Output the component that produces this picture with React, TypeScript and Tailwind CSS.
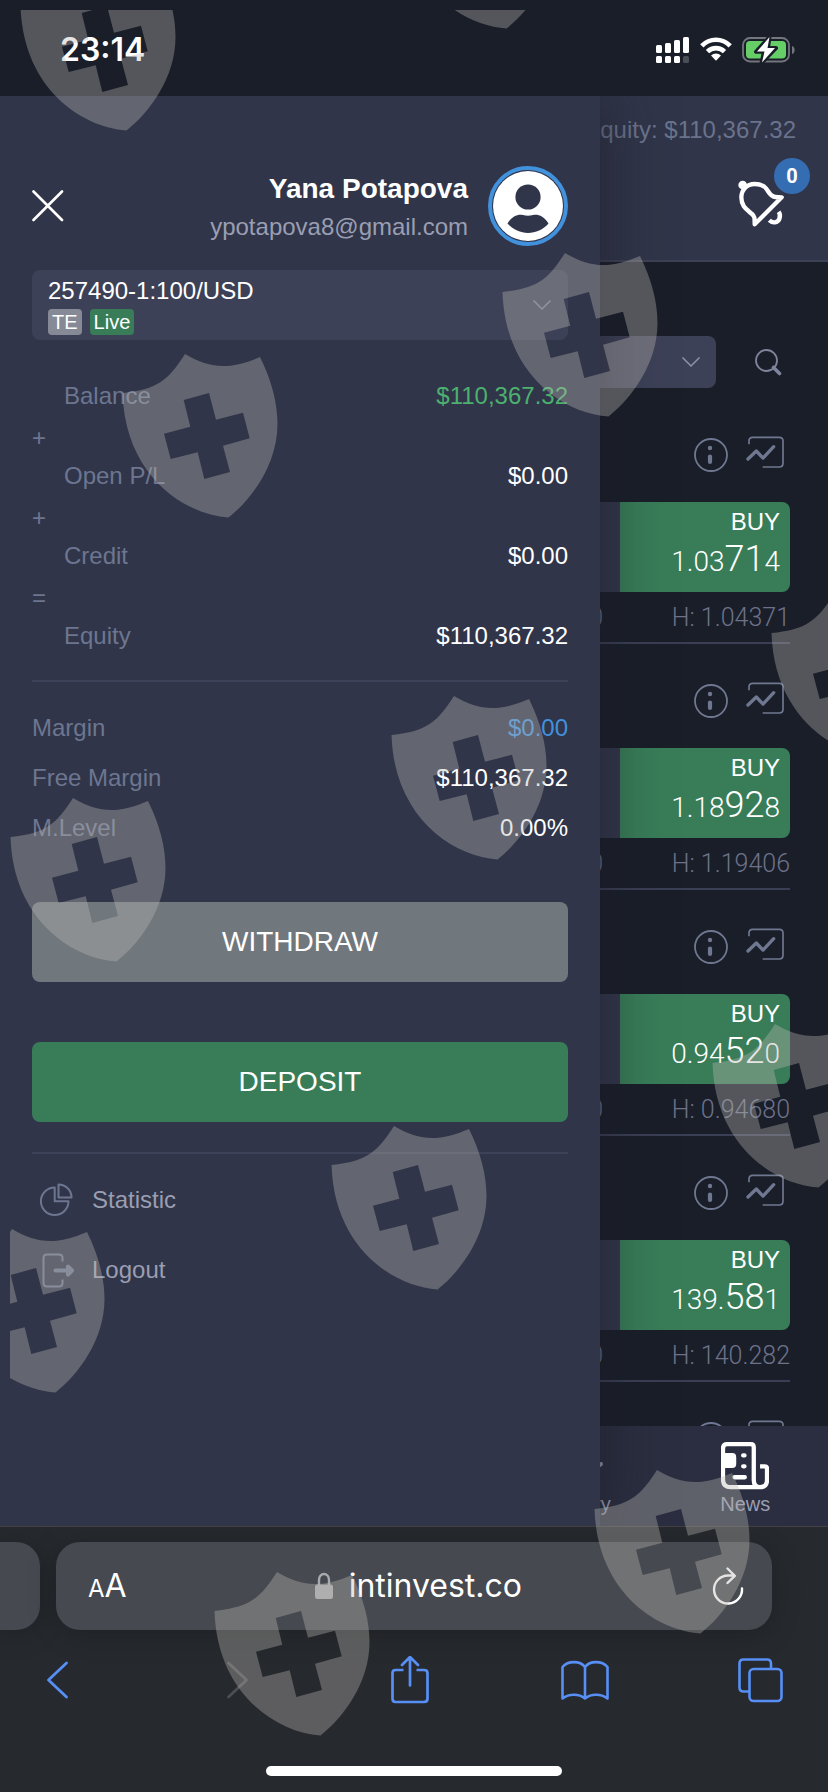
import { useState } from "react";

interface Quote {
    id: number;
    low: string;
    high: string;
    head: string;
    pips: string;
    tail: string;
}

const quotes: Quote[] = [
    { id: 1, head: "1.03", pips: "71", tail: "4", low: "1.03270", high: "1.04371" },
    { id: 2, head: "1.18", pips: "92", tail: "8", low: "1.18350", high: "1.19406" },
    { id: 3, head: "0.94", pips: "52", tail: "0", low: "0.94010", high: "0.94680" },
    { id: 4, head: "139.", pips: "58", tail: "1", low: "138.450", high: "140.282" },
    { id: 5, head: "0.67", pips: "14", tail: "2", low: "0.66890", high: "0.67208" },
];

const balanceRows = [
    { label: "Balance", value: "$110,367.32", color: "text-[#4cb06e]", sign: "+" },
    { label: "Open P/L", value: "$0.00", color: "text-white", sign: "+" },
    { label: "Credit", value: "$0.00", color: "text-white", sign: "=" },
    { label: "Equity", value: "$110,367.32", color: "text-white", sign: "" },
];

const marginRows = [
    { label: "Margin", value: "$0.00", color: "text-[#4191dd]" },
    { label: "Free Margin", value: "$110,367.32", color: "text-white" },
    { label: "M.Level", value: "0.00%", color: "text-white" },
];

const shields = [
    [20, -33], [400, -135], [122, 354], [502, 253], [771, 594], [391, 696],
    [10, 798], [712, 1024], [331, 1126], [-51, 1229], [594, 1470], [214, 1572],
];

const Shields = () => (
    <div className="absolute top-2.5 left-2.5 right-0 bottom-0 overflow-hidden pointer-events-none z-30">
        <svg className="w-full h-full" fill="#bab8b4" fillOpacity="0.37" aria-hidden="true">
            {shields.map(([x, y]) => (
                <path
                    key={`${x}-${y}`}
                    transform={`translate(${x - 10} ${y - 10})`}
                    fillRule="evenodd"
                    d="M63 0C88 15 108 16 138 3C150 27 155.500 50 155.500 70C155.500 110 130 145 106.500 163.500C60 160 3 120 .5 39C37 35 46 26 63 0ZM61.700 46L68.300 72.700L42 79.700L48.700 105L75.700 98.300L82.300 125L108 118L101 91.700L127.700 84.300L121 58.700L94 65.700L87 39Z"
                />
            ))}
        </svg>
    </div>
);

const ChevronDown = ({ className }: { className?: string }) => (
    <svg className={className} width="20" height="12" viewBox="0 0 20 12" fill="none" stroke="currentColor" strokeWidth="1.500">
        <path d="M1.500 1.500L10 10L18.500 1.500" />
    </svg>
);

const StatusBar = () => (
    <div className="h-24 shrink-0 flex items-center justify-between pl-[60px] pr-8 pt-1">
        <span className="font-[Inter,sans-serif] font-semibold text-[32px] leading-10 text-white">23:14</span>
        <div className="flex items-center gap-2.5">
            <svg width="34" height="26" viewBox="0 0 34 26" fill="#fff">
                <rect x="0" y="8" width="6" height="8" rx="1.500" />
                <rect x="9" y="6" width="6" height="10" rx="1.500" />
                <rect x="18" y="3" width="6" height="13" rx="1.500" />
                <rect x="27" y="0" width="6" height="16" rx="1.500" />
                <rect x="0" y="19" width="6" height="7" rx="1.500" />
                <rect x="9" y="19" width="6" height="7" rx="1.500" />
                <rect x="18" y="19" width="6" height="7" rx="1.500" />
                <rect x="27" y="19" width="6" height="7" rx="1.500" fill="#4a4e57" />
            </svg>
            <svg width="32" height="26" viewBox="0 0 32 26" fill="none" stroke="#fff" strokeWidth="4.600">
                <path d="M1.800 8.800C9.800 .7 22.200 .7 30.200 8.800" />
                <path d="M7.500 14.600C12.300 9.900 19.700 9.900 24.500 14.600" />
                <path d="M11 18.600C13.900 15.900 18.100 15.900 21 18.600L16 23.800Z" fill="#fff" stroke="none" />
            </svg>
            <svg width="54" height="26" viewBox="0 0 54 26" fill="none">
                <rect x="1" y="1" width="46" height="23.500" rx="7" stroke="#73767d" strokeWidth="1.800" />
                <rect x="4" y="4" width="40" height="17.500" rx="4" fill="#66ce67" />
                <path d="M50 9C53.500 10 53.500 16 50 17Z" fill="#73767d" />
                <path d="M27.500 0L14 14.800H22L19.500 26L34 11H26Z" fill="#fff" stroke="#191e29" strokeWidth="4" strokeLinejoin="round" />
                <path d="M27.500 0L15 14.500H22.500L20 25.500L33 11H25.500Z" fill="#fff" />
            </svg>
        </div>
    </div>
);

const InfoIcon = () => (
    <svg width="34" height="36" viewBox="0 0 34 36" fill="none" stroke="currentColor">
        <circle cx="17" cy="19" r="16" strokeWidth="1.800" />
        <circle cx="16" cy="12" r="2.200" fill="currentColor" stroke="none" />
        <path d="M16 20.500V26" strokeWidth="4.200" strokeLinecap="round" />
    </svg>
);

const ChartIcon = () => (
    <svg width="38" height="36" viewBox="0 0 114 108" fill="none" stroke="currentColor">
        <path d="M9 25V15Q9 4 20 4H100Q111 4 111 15V82Q111 93 100 93H50" strokeWidth="5" />
        <path d="M6 69L31 45L51 66L83 32" strokeWidth="10" strokeLinecap="round" strokeLinejoin="round" />
    </svg>
);

const QuoteRow = ({ quote }: { quote: Quote }) => (
    <li className="pt-[38px] pb-2 border-b-2 border-[#3b3f56]">
        <div className="flex justify-end gap-[18px] pr-1.5 text-[#6f7890]">
            <button aria-label="Info"><InfoIcon /></button>
            <button aria-label="Chart"><ChartIcon /></button>
        </div>
        <div className="flex mt-[30px]">
            <div className="flex-1 bg-[#33374c] rounded-l-lg" />
            <button className="w-[170px] bg-[#387d58] rounded-r-lg px-2.5 pt-1 pb-1.5 text-right text-white">
                <span className="block text-2xl leading-8">BUY</span>
                <span className="block font-[Roboto,sans-serif] font-light text-[28px] leading-[48px]">
                    {quote.head}
                    <span className="text-4xl leading-none">{quote.pips}</span>
                    {quote.tail}
                </span>
            </button>
        </div>
        <div className="flex justify-end pt-2.5 font-[Roboto,sans-serif] font-light text-[25px] leading-8 text-[#6d7289]">
            <span>L: {quote.low}</span>
            <span className="w-[187px] text-right">H: {quote.high}</span>
        </div>
    </li>
);

const TradingPage = () => (
    <div className="h-full flex flex-col">
        <header className="shrink-0 flex flex-col items-end pt-[18px] pr-8 pb-8 bg-[#303549] border-b-2 border-[#3d4156]">
            <span className="text-2xl leading-8 text-[#6a738c]">Equity: $110,367.32</span>
            <button aria-label="Notifications" className="relative mt-[34px] mr-3 text-white">
                <svg width="46" height="48" viewBox="0 0 138 144" fill="none" stroke="currentColor" strokeWidth="13" strokeLinecap="round" strokeLinejoin="round">
                    <circle cx="14" cy="15" r="13" fill="currentColor" stroke="none" />
                    <path d="M131 52L112 51C96 50 92 34 84 25C75 15 64 12 50 12C26 12 10 30 10 52C10 80 26 88 42 102C50 109 50 112 50 133Z" />
                    <path d="M94 121C104 131 119 128 124 117C127 109 127 102 122 95" strokeLinecap="butt" />
                </svg>
                <span className="absolute -top-[22px] left-9 w-9 h-9 rounded-full bg-[#356db3] flex items-center justify-center text-xl font-bold font-[Roboto,sans-serif]">0</span>
            </button>
        </header>

        <div className="flex-1 min-h-0 overflow-hidden">
            <div className="flex items-center pt-[74px] pb-2.5 pl-8 pr-2">
                <div className="relative flex-1">
                    <select aria-label="Market" className="appearance-none block w-full h-[52px] px-4 rounded-lg bg-[#3d4157] text-2xl text-white">
                        <option>Forex</option>
                    </select>
                    <ChevronDown className="absolute right-[15px] top-5 text-[#8d93a8]" />
                </div>
                <button aria-label="Search" className="w-[104px] flex justify-center text-[#7e849b]">
                    <svg width="28" height="28" viewBox="0 0 28 28" fill="none" stroke="currentColor">
                        <circle cx="12.500" cy="12.500" r="10.500" strokeWidth="1.800" />
                        <path d="M19.500 19.500L25.500 25.500" strokeWidth="3.600" strokeLinecap="round" />
                    </svg>
                </button>
            </div>
            <ul className="pl-8 mr-[38px]">
                {quotes.map(quote => <QuoteRow key={quote.id} quote={quote} />)}
            </ul>
        </div>

        <nav className="shrink-0 grid grid-cols-5 pt-4 pb-2 bg-[#2a2e40] text-xl leading-7 text-[#9a9eb2]">
            <a href="#trade" className="flex flex-col items-center justify-end">Trade</a>
            <a href="#orders" className="flex flex-col items-center justify-end">Orders</a>
            <a href="#chart" className="flex flex-col items-center justify-end">Chart</a>
            <a href="#history" className="flex flex-col items-center">
                <svg width="48" height="48" viewBox="0 0 48 48" fill="none" stroke="#9a9eb2" strokeWidth="4" strokeLinecap="round">
                    <path d="M8 24L22 38L45 22" />
                </svg>
                History
            </a>
            <a href="#news" className="flex flex-col items-center">
                <svg width="48" height="48" viewBox="0 0 145 144" fill="none" stroke="#fff" strokeWidth="13">
                    <path d="M118 136H28Q6 136 6 112V20Q6 6 18 6H90Q99 6 99 15V114Q99 136 118 136Q139 136 139 114V80Q139 73 132 73H118" />
                    <path d="M10 33H34Q46 33 46 46V66Q46 78 34 78H10Z" fill="#fff" stroke="none" />
                    <path d="M67 40H71M67 73H71M41 106H72" strokeLinecap="round" />
                </svg>
                News
            </a>
        </nav>
    </div>
);

const Drawer = ({ onClose }: { onClose: () => void }) => (
    <aside className="absolute inset-y-0 left-0 z-20 w-[600px] max-w-full overflow-hidden px-8 pt-[70px] bg-[#303549] shadow-[0_0_56px_rgba(28,28,38,0.7)] text-2xl">
        <div className="flex items-center">
            <button onClick={onClose} aria-label="Close" className="text-white">
                <svg width="32" height="32" viewBox="0 0 32 32" fill="none" stroke="currentColor" strokeWidth="2.600" strokeLinecap="round">
                    <path d="M1.500 1.500L30 30M30 1.500L1.500 30" />
                </svg>
            </button>
            <div className="flex-1 pt-0.5 text-right">
                <h2 className="text-[28px] leading-9 font-bold text-white">Yana Potapova</h2>
                <p className="mt-1 leading-8 text-[#9a9eb2]">ypotapova8@gmail.com</p>
            </div>
            <svg className="ml-5" width="80" height="80" viewBox="0 0 80 80">
                <circle cx="40" cy="40" r="38" fill="none" stroke="#4191dd" strokeWidth="4" />
                <circle cx="40" cy="40" r="35" fill="#fff" />
                <circle cx="40" cy="31" r="12.600" fill="#303549" />
                <path d="M19.500 57.500C24 50 30 48 35 49Q40 50.500 45 49C50 48 56 50 60.500 57.500C50 70 30 70 19.500 57.500Z" fill="#303549" />
            </svg>
        </div>

        <button className="mt-6 w-full flex items-center rounded-lg bg-[#3d4157] py-[5px] px-4 text-left text-white">
            <span className="flex-1 flex flex-col gap-0.5">
                <span className="leading-8">257490-1:100/USD</span>
                <span className="flex gap-2 text-xl leading-[26px]">
                    <span className="px-1 rounded bg-[#868996]">TE</span>
                    <span className="px-1 rounded bg-[#387d58]">Live</span>
                </span>
            </span>
            <ChevronDown className="text-[#7c8297]" />
        </button>

        <dl className="mt-9 leading-10">
            {balanceRows.map(row => (
                <div key={row.label}>
                    <div className="flex justify-between pl-8">
                        <dt className="text-[#6d7690]">{row.label}</dt>
                        <dd className={row.color}>{row.value}</dd>
                    </div>
                    {row.sign && <div className="h-10 leading-[44px] text-[#6d7690]">{row.sign}</div>}
                </div>
            ))}
        </dl>

        <hr className="mt-6 border-t-2 border-[#3d4258]" />

        <dl className="mt-[21px] leading-[50px]">
            {marginRows.map(row => (
                <div key={row.label} className="flex justify-between">
                    <dt className="text-[#6d7690]">{row.label}</dt>
                    <dd className={row.color}>{row.value}</dd>
                </div>
            ))}
        </dl>

        <button className="mt-[49px] w-full h-20 rounded-lg bg-[#70787e] text-[28px] text-white">WITHDRAW</button>
        <button className="mt-[60px] w-full h-20 rounded-lg bg-[#387d58] text-[28px] text-white">DEPOSIT</button>

        <hr className="mt-[30px] border-t-2 border-[#3d4258]" />

        <div className="mt-[11px] flex flex-col leading-[70px] text-[#9a9eb2]">
            <a href="#statistic" className="flex items-center gap-4 pl-2">
                <svg width="36" height="36" viewBox="0 0 36 36" fill="none" stroke="#6d7690" strokeWidth="2" strokeLinejoin="round">
                    <path d="M14.700 5.500A13.800 13.800 0 1 0 28.500 19.300H14.700Z" />
                    <path d="M18.500 2.500A13 13 0 0 1 31.500 15.500H18.500Z" />
                </svg>
                Statistic
            </a>
            <a href="#logout" className="flex items-center gap-4 pl-2">
                <svg width="36" height="36" viewBox="0 0 36 36" fill="none" stroke="#6d7690" strokeWidth="2">
                    <path d="M22.500 9.500V6Q22.500 2.500 19 2.500H7Q3.500 2.500 3.500 6V31Q3.500 34.500 7 34.500H19Q22.500 34.500 22.500 31V27.500" />
                    <path d="M15.500 18.500H27" strokeWidth="4" strokeLinecap="round" />
                    <path d="M28 14.500L32 18.500L28 22.500Z" fill="#6d7690" strokeWidth="4" strokeLinejoin="round" />
                </svg>
                Logout
            </a>
        </div>
    </aside>
);

const BrowserBar = () => (
    <footer className="shrink-0 pt-[15px] pb-4 border-t border-[#434144] bg-[#26292e]">
        <div className="flex gap-4 pr-14">
            <div className="w-10 rounded-r-3xl bg-[#464950] shadow-[0_4px_30px_rgba(0,0,0,0.2)]" />
            <div className="flex-1 h-[88px] flex items-center justify-between pl-8 pr-7 rounded-3xl bg-[#464950] shadow-[0_4px_30px_rgba(0,0,0,0.2)] text-white font-[Inter,sans-serif]">
                <button aria-label="Text size" className="text-[32px]">
                    <span className="text-2xl">A</span>A
                </button>
                <div className="flex items-center gap-4 pr-0.5">
                    <svg width="18" height="28" viewBox="0 0 18 28" fill="none">
                        <path d="M4 13V8C4 0 14 0 14 8V13" stroke="#a9aaae" strokeWidth="2.400" />
                        <rect x="0" y="12.500" width="18" height="14.500" rx="2.500" fill="#a9aaae" />
                    </svg>
                    <span className="text-[32px]">intinvest.co</span>
                </div>
                <button aria-label="Reload">
                    <svg width="32" height="38" viewBox="0 0 32 38" fill="none" stroke="currentColor" strokeWidth="2.400" strokeLinecap="round" strokeLinejoin="round">
                        <path d="M30 21.500A14 14 0 1 1 16 8.500H22" />
                        <path d="M15.500 1.500L22.800 8.800L15.500 16" />
                    </svg>
                </button>
            </div>
        </div>

        <div className="mt-[26px] flex justify-between pl-[34px] pr-11 text-[#578ff5]">
            <button aria-label="Back">
                <svg width="48" height="48" viewBox="0 0 48 48" fill="none" stroke="currentColor" strokeWidth="2.800" strokeLinecap="round" strokeLinejoin="round">
                    <path d="M32.500 7L14.500 24L32.500 41" />
                </svg>
            </button>
            <button aria-label="Forward" className="text-[#4c4e52]">
                <svg width="48" height="48" viewBox="0 0 48 48" fill="none" stroke="currentColor" strokeWidth="2.800" strokeLinecap="round" strokeLinejoin="round">
                    <path d="M18.500 7L36.500 24L18.500 41" />
                </svg>
            </button>
            <button aria-label="Share">
                <svg width="48" height="48" viewBox="0 0 48 48" fill="none" stroke="currentColor" strokeWidth="2.700" strokeLinecap="round" strokeLinejoin="round">
                    <path d="M18.500 14H10.500Q7.500 14 7.500 17V42.500Q7.500 46 10.500 46H39Q42.500 46 42.500 42.500V17Q42.500 14 39 14H31.500" strokeLinecap="butt" />
                    <path d="M25 29.500V1.500M17 9L25 1L33 9" />
                </svg>
            </button>
            <button aria-label="Bookmarks">
                <svg width="48" height="48" viewBox="0 0 48 48" fill="none" stroke="currentColor" strokeWidth="2.600" strokeLinejoin="round">
                    <path d="M24 11C19 4.500 7 4.500 1.500 11V42.500C8 37.500 18 37.500 24 42.500C30 37.500 40 37.500 46.500 42.500V11C41 4.500 29 4.500 24 11ZM24 11V43" />
                </svg>
            </button>
            <button aria-label="Tabs">
                <svg width="48" height="48" viewBox="0 0 48 48" fill="none" stroke="currentColor" strokeWidth="2.600">
                    <rect x="13.500" y="13" width="32" height="32" rx="4" />
                    <path d="M13 35.500H7.500Q3.500 35.500 3.500 31.500V7.500Q3.500 3.500 7.500 3.500H31Q35 3.500 35 7.500V13" />
                </svg>
            </button>
        </div>

        <div className="mt-[62px] mx-auto w-[296px] h-2.5 rounded-full bg-white" />
    </footer>
);

export default function App() {
    const [open, setOpen] = useState(true);

    return (
        <div className="relative h-screen flex flex-col overflow-hidden bg-[#191e29] font-['Liberation_Sans',sans-serif]">
            <StatusBar />
            <main className="relative flex-1 min-h-0 overflow-hidden">
                <TradingPage />
                {open && <Drawer onClose={() => setOpen(false)} />}
            </main>
            <BrowserBar />
            <Shields />
        </div>
    );
}
